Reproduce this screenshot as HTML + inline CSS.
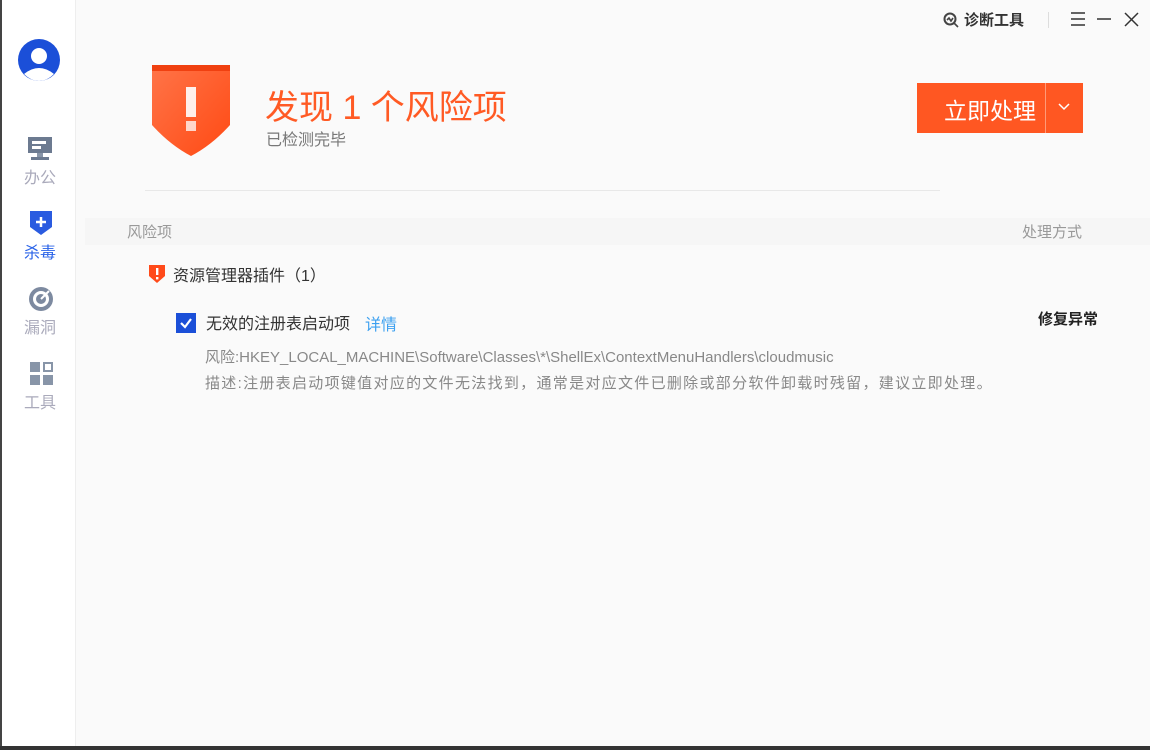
<!DOCTYPE html><html><head><meta charset="utf-8"><style>
*{margin:0;padding:0;box-sizing:border-box}
body{width:1150px;height:750px;overflow:hidden;background:#fafafa;font-family:"Liberation Sans","Noto Sans CJK SC",sans-serif;position:relative}
.a{position:absolute;white-space:nowrap}
.side{position:absolute;left:0;top:0;width:76px;height:750px;background:#fff;border-left:2px solid #444;border-right:1px solid #eee}
.nav{position:absolute;left:0;width:76px;text-align:center;font-size:16px;color:#aab}
</style></head><body>
<div class="side">
<svg class="a" style="left:15px;top:38px" width="44" height="44" viewBox="0 0 44 44"><circle cx="22" cy="22" r="21" fill="#1b4fd8"/><circle cx="22" cy="18" r="8" fill="#fff"/><path d="M7 36 Q22 24 37 36 Q30 43 22 43 Q14 43 7 36Z" fill="#fff"/></svg>
<svg class="a" style="left:25px;top:136px" width="26" height="26"><rect x="1" y="1" width="24" height="16" fill="#6c7a90"/><rect x="5" y="5" width="14" height="3" fill="#fff"/><rect x="5" y="10" width="9" height="3" fill="#fff"/><rect x="10" y="17" width="6" height="4" fill="#8895a8"/><rect x="4" y="21" width="18" height="3" fill="#6c7a90"/></svg>
<div class="nav" style="top:164px">办公</div>
<svg class="a" style="left:27px;top:210px" width="24" height="26"><path d="M1 1H23V17L12 25L1 17Z" fill="#2a5be0"/><path d="M12 7V17M7 12H17" stroke="#fff" stroke-width="2.5"/></svg>
<div class="nav" style="top:239px;color:#2a63e8">杀毒</div>
<svg class="a" style="left:26px;top:286px" width="26" height="26"><circle cx="13" cy="13" r="12" fill="#7d8aa0"/><circle cx="13" cy="13" r="8" fill="#fff"/><circle cx="13" cy="13" r="5" fill="#7d8aa0"/><path d="M13 13L21 5" stroke="#fff" stroke-width="2"/></svg>
<div class="nav" style="top:314px">漏洞</div>
<svg class="a" style="left:28px;top:362px" width="24" height="24"><rect x="0" y="0" width="10" height="10" fill="#8895a8"/><rect x="13" y="0" width="10" height="10" fill="#8895a8"/><rect x="15" y="2" width="6" height="6" fill="#fff"/><rect x="0" y="13" width="10" height="10" fill="#8895a8"/><rect x="13" y="13" width="10" height="10" fill="#8895a8"/></svg>
<div class="nav" style="top:389px">工具</div>
</div>
<svg class="a" style="left:943px;top:12px" width="16" height="16"><circle cx="7" cy="7" r="5.5" fill="none" stroke="#444" stroke-width="2"/><path d="M11 11L15 15M4 8L6 6L8 9L10 6" stroke="#444" stroke-width="1.6" fill="none"/></svg>
<div class="a" style="left:964px;top:9px;font-size:15px;font-weight:bold;color:#333">诊断工具</div>
<div class="a" style="left:1048px;top:12px;width:1px;height:16px;background:#ddd"></div>
<svg class="a" style="left:1068px;top:11px" width="75" height="16"><path d="M3 2H17M3 8H17M3 14H17M29 8H43M57 2L70 15M70 2L57 15" stroke="#333" stroke-width="1.5"/></svg>
<svg class="a" style="left:152px;top:65px" width="78" height="91"><defs><linearGradient id="g" x1="0" y1="0" x2="1" y2="1"><stop offset="0" stop-color="#ff7448"/><stop offset="1" stop-color="#ff4a14"/></linearGradient></defs><path d="M0 0H78V60Q60 80 39 91Q18 80 0 60Z" fill="url(#g)"/><rect x="0" y="0" width="78" height="6" fill="#f04010"/><rect x="34" y="22" width="10" height="30" fill="#fff" opacity="0.9"/><rect x="34" y="56" width="10" height="10" fill="#fff" opacity="0.75"/></svg>
<div class="a" style="left:265px;top:80px;font-size:34px;color:#ff5a24">发现 1 个风险项</div>
<div class="a" style="left:266px;top:126px;font-size:16px;color:#777">已检测完毕</div>
<div class="a" style="left:917px;top:83px;width:166px;height:50px;background:#ff5722"></div>
<div class="a" style="left:944px;top:92px;font-size:23px;color:#fff">立即处理</div>
<div class="a" style="left:1045px;top:83px;width:1px;height:50px;background:#ff9a78"></div>
<svg class="a" style="left:1057px;top:102px" width="14" height="10"><path d="M2 2L7 7L12 2" stroke="#fff" stroke-width="1.5" fill="none"/></svg>
<div class="a" style="left:145px;top:190px;width:795px;height:1px;background:#e8e8e8"></div>
<div class="a" style="left:85px;top:218px;width:1065px;height:27px;background:#f6f6f6"></div>
<div class="a" style="left:127px;top:221px;font-size:15px;color:#999">风险项</div>
<div class="a" style="left:1022px;top:221px;font-size:15px;color:#999">处理方式</div>
<svg class="a" style="left:148px;top:264px" width="18" height="20"><path d="M1 1H17V12L9 19L1 12Z" fill="#ff4a1a"/><rect x="8" y="4" width="2.4" height="7" fill="#fff"/><rect x="8" y="13" width="2.4" height="2.4" fill="#fff"/></svg>
<div class="a" style="left:173px;top:262px;font-size:16px;color:#333">资源管理器插件（1）</div>
<div class="a" style="left:176px;top:313px;width:20px;height:20px;background:#1b4fd8"></div>
<svg class="a" style="left:176px;top:313px" width="20" height="20"><path d="M5 10L9 14L15 6" stroke="#fff" stroke-width="2.2" fill="none"/></svg>
<div class="a" style="left:206px;top:310px;font-size:16px;color:#333">无效的注册表启动项</div>
<div class="a" style="left:365px;top:311px;font-size:16px;color:#3ca0f0">详情</div>
<div class="a" style="left:1038px;top:308px;font-size:15px;color:#222;font-weight:bold">修复异常</div>
<div class="a" style="left:205px;top:346px;font-size:15px;color:#888;letter-spacing:0px">风险:HKEY_LOCAL_MACHINE\Software\Classes\*\ShellEx\ContextMenuHandlers\cloudmusic</div>
<div class="a" style="left:205px;top:372px;font-size:15px;color:#888;letter-spacing:1.3px">描述:注册表启动项键值对应的文件无法找到，通常是对应文件已删除或部分软件卸载时残留，建议立即处理。</div>
<div class="a" style="left:0;top:746px;width:1150px;height:4px;background:#333"></div>
</body></html>
